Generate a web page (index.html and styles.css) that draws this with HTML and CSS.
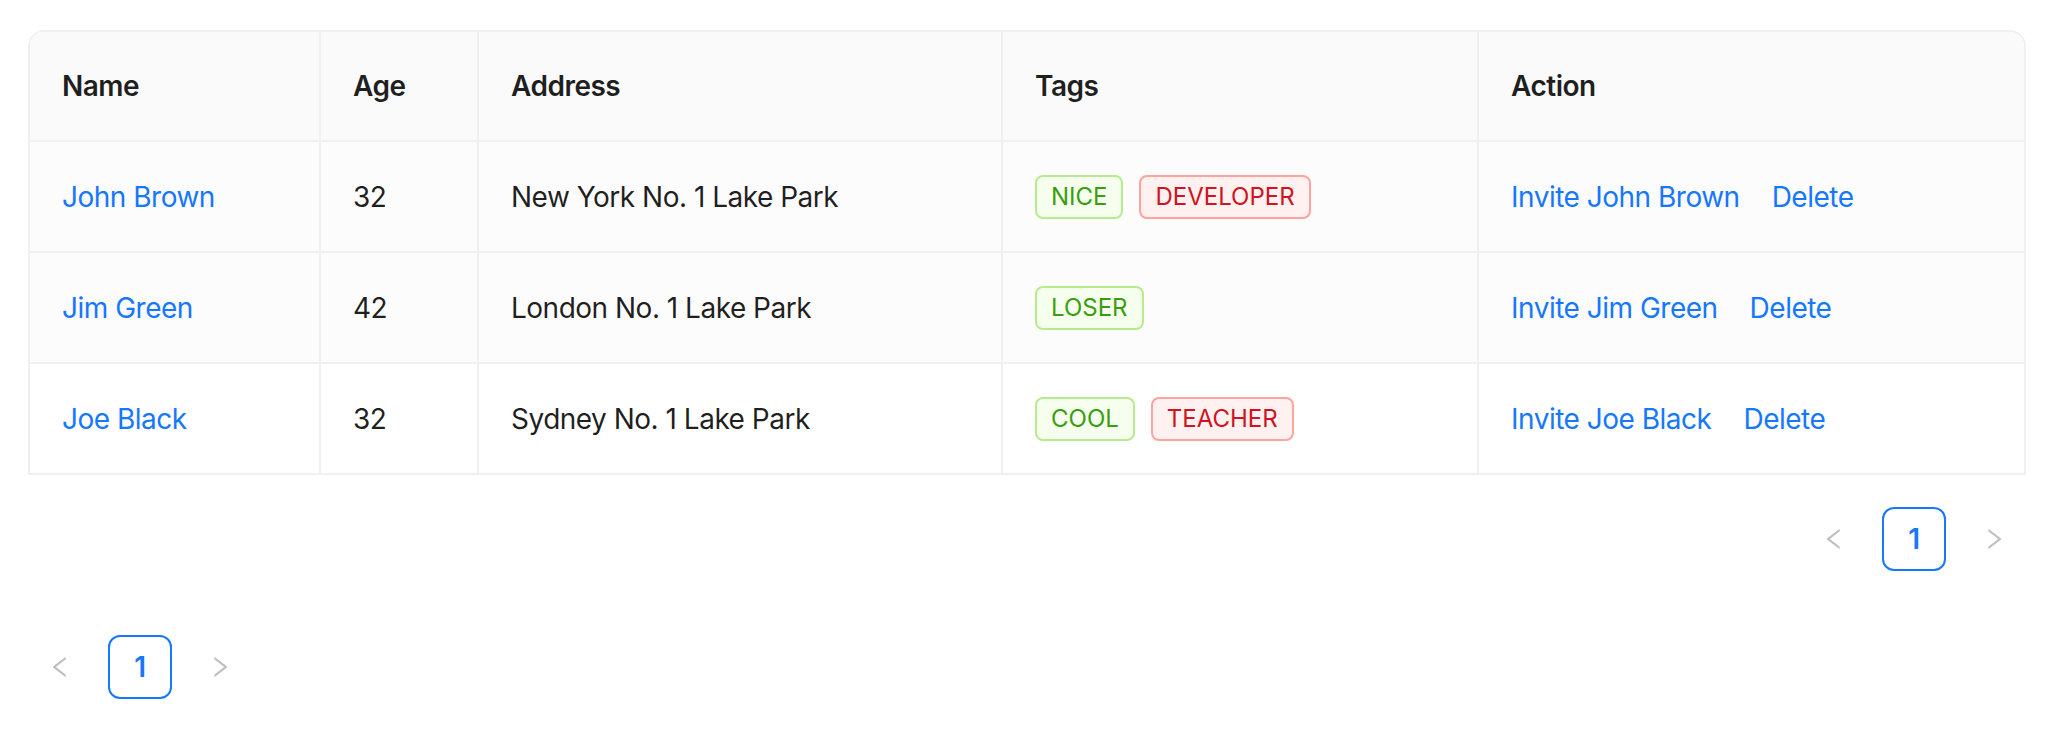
FILE: index.html
```html
<!DOCTYPE html>
<html lang="en">
<head>
<meta charset="utf-8">
<title>Table</title>
<link rel="stylesheet" href="styles.css">
</head>
<body>
<div class="page">
  <div class="table-wrap">
    <table class="table">
      <thead>
        <tr>
          <th class="c-name">Name</th>
          <th class="c-age">Age</th>
          <th class="c-addr">Address</th>
          <th class="c-tags">Tags</th>
          <th class="c-action">Action</th>
        </tr>
      </thead>
      <tbody>
        <tr class="row-tint">
          <td><a class="link" href="#">John Brown</a></td>
          <td>32</td>
          <td>New York No. 1 Lake Park</td>
          <td><div class="tags"><span class="tag tag-green">NICE</span><span class="tag tag-red">DEVELOPER</span></div></td>
          <td><div class="actions"><a class="link" href="#">Invite John Brown</a><a class="link" href="#">Delete</a></div></td>
        </tr>
        <tr class="row-tint">
          <td><a class="link" href="#">Jim Green</a></td>
          <td>42</td>
          <td>London No. 1 Lake Park</td>
          <td><div class="tags"><span class="tag tag-green">LOSER</span></div></td>
          <td><div class="actions"><a class="link" href="#">Invite Jim Green</a><a class="link" href="#">Delete</a></div></td>
        </tr>
        <tr class="row-last">
          <td><a class="link" href="#">Joe Black</a></td>
          <td>32</td>
          <td>Sydney No. 1 Lake Park</td>
          <td><div class="tags"><span class="tag tag-green">COOL</span><span class="tag tag-red">TEACHER</span></div></td>
          <td><div class="actions"><a class="link" href="#">Invite Joe Black</a><a class="link" href="#">Delete</a></div></td>
        </tr>
      </tbody>
    </table>
  </div>

  <ul class="pagination pagination-right">
    <li class="pg-arrow" title="Previous Page">
      <svg viewBox="64 64 896 896" width="24" height="24" fill="currentColor"><path d="M724 218.3V141c0-6.7-7.7-10.4-12.9-6.3L260.3 486.8a31.86 31.86 0 000 50.3l450.8 352.1c5.3 4.1 12.9.4 12.9-6.3v-77.3c0-4.9-2.3-9.6-6.1-12.6l-360-281 360-281.1c3.8-3 6.1-7.7 6.1-12.6z"/></svg>
    </li>
    <li class="pg-item pg-active">1</li>
    <li class="pg-arrow" title="Next Page">
      <svg viewBox="64 64 896 896" width="24" height="24" fill="currentColor"><path d="M765.7 486.8L314.9 134.7A7.97 7.97 0 00302 141v77.3c0 4.9 2.3 9.6 6.1 12.6l360 281.1-360 281.1c-3.9 3-6.1 7.7-6.1 12.6V883c0 6.7 7.7 10.4 12.9 6.3l450.8-352.1a31.96 31.96 0 000-50.4z"/></svg>
    </li>
  </ul>

  <ul class="pagination pagination-left">
    <li class="pg-arrow" title="Previous Page">
      <svg viewBox="64 64 896 896" width="24" height="24" fill="currentColor"><path d="M724 218.3V141c0-6.7-7.7-10.4-12.9-6.3L260.3 486.8a31.86 31.86 0 000 50.3l450.8 352.1c5.3 4.1 12.9.4 12.9-6.3v-77.3c0-4.9-2.3-9.6-6.1-12.6l-360-281 360-281.1c3.8-3 6.1-7.7 6.1-12.6z"/></svg>
    </li>
    <li class="pg-item pg-active">1</li>
    <li class="pg-arrow" title="Next Page">
      <svg viewBox="64 64 896 896" width="24" height="24" fill="currentColor"><path d="M765.7 486.8L314.9 134.7A7.97 7.97 0 00302 141v77.3c0 4.9 2.3 9.6 6.1 12.6l360 281.1-360 281.1c-3.9 3-6.1 7.7-6.1 12.6V883c0 6.7 7.7 10.4 12.9 6.3l450.8-352.1a31.96 31.96 0 000-50.4z"/></svg>
    </li>
  </ul>
</div>
</body>
</html>
```
FILE: styles.css
```css
* { box-sizing: border-box; }

html, body {
  margin: 0;
  padding: 0;
  background: #ffffff;
}

body {
  font-family: Inter, "Noto Sans", Roboto, sans-serif;
  font-size: 28px;
  line-height: 44px;
  letter-spacing: -0.5px;
  color: rgba(0, 0, 0, 0.88);
}

.page {
  padding: 30px 24px 0 28px;
}

.table-wrap {
  border: 2px solid #f0f0f0;
  border-bottom: 0;
  border-radius: 16px 16px 0 0;
  overflow: hidden;
}

.table {
  width: 100%;
  border-collapse: separate;
  border-spacing: 0;
  table-layout: fixed;
}

.table th,
.table td {
  padding: 32px;
  text-align: left;
  vertical-align: middle;
  border-right: 2px solid #f0f0f0;
  border-bottom: 2px solid #f0f0f0;
  white-space: nowrap;
}

.table td {
  padding-top: 33px;
}

.table th:last-child,
.table td:last-child {
  border-right: 0;
}

.table th {
  background: #fafafa;
  font-weight: 600;
  color: rgba(0, 0, 0, 0.88);
}

.c-name { width: 291px; }
.c-age { width: 158px; }
.c-addr { width: 524px; }
.c-tags { width: 476px; }

.row-tint td { background: #fcfcfc; }
.row-last td { background: #ffffff; }

.link {
  color: #1677ff;
  text-decoration: none;
}

.actions {
  display: flex;
  gap: 32px;
  height: 44px;
  align-items: center;
}

.tags {
  display: flex;
  gap: 16px;
  height: 44px;
  align-items: center;
}

.tag {
  display: block;
  height: 44px;
  padding: 0 14px;
  font-size: 24px;
  line-height: 40px;
  letter-spacing: 0;
  border: 2px solid;
  border-radius: 8px;
}

.tag-green {
  color: #389e0d;
  background: #f6ffed;
  border-color: #b7eb8f;
}

.tag-red {
  color: #cf1322;
  background: #fff1f0;
  border-color: #ffa39e;
}

.pagination {
  list-style: none;
  margin: 0;
  padding: 0;
  display: flex;
  gap: 16px;
}

.pagination-right {
  justify-content: flex-end;
  margin-top: 32px;
}

.pagination-left {
  justify-content: flex-start;
  margin-top: 64px;
}

.pg-arrow {
  width: 64px;
  height: 64px;
  display: flex;
  align-items: center;
  justify-content: center;
  color: rgba(0, 0, 0, 0.25);
}

.pg-item {
  width: 64px;
  height: 64px;
  display: flex;
  align-items: center;
  justify-content: center;
  border: 2px solid transparent;
  border-radius: 12px;
  font-size: 28px;
}

.pg-active {
  border-color: #1677ff;
  color: #1677ff;
  font-weight: 600;
}
```
